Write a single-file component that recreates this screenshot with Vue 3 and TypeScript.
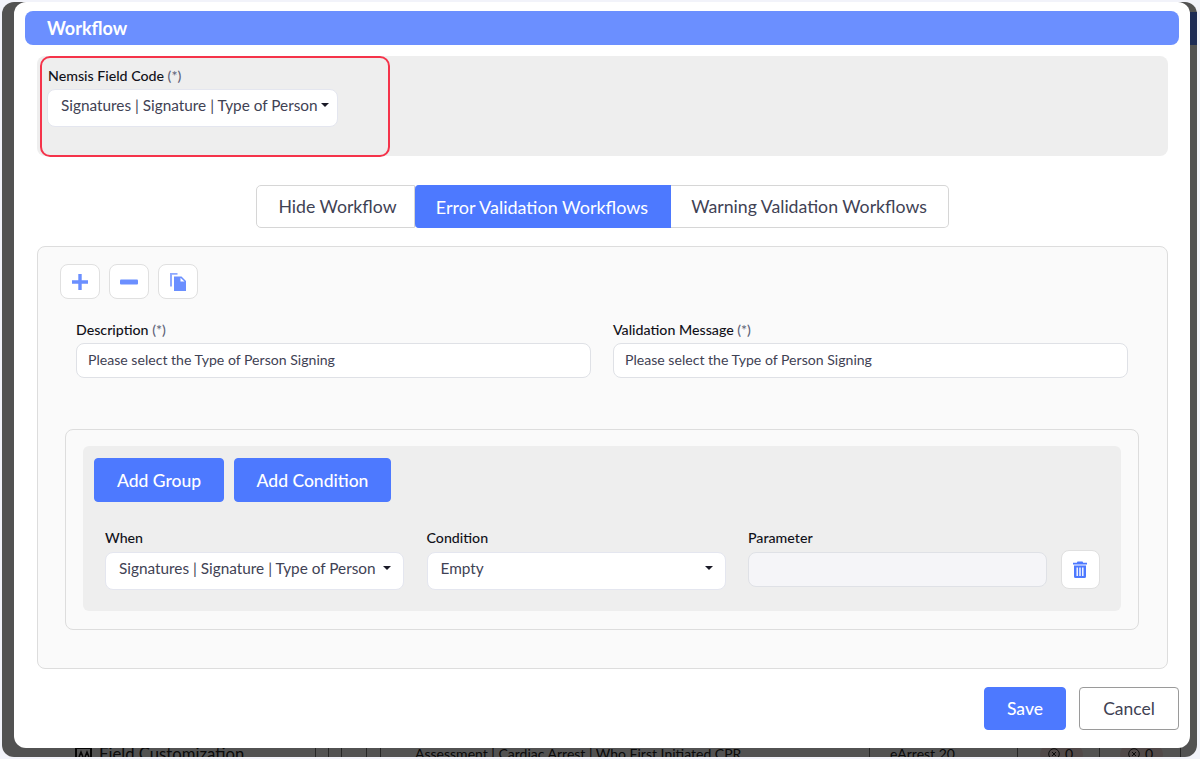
<script setup lang="ts">
import { ref } from "vue";

// タブ
const tabs = ["Hide Workflow", "Error Validation Workflows", "Warning Validation Workflows"];
const activeTab = ref(1);

const fieldCode = "Signatures | Signature | Type of Person";
const message = "Please select the Type of Person Signing";

// 背面の表の罫線(x座標)
const behindLines = [315, 328, 341, 366, 380, 869, 1017, 1099, 1180];
</script>

<template>
    <div class="page">
        <!-- 背面の画面(モーダルの下にわずかに見える部分) -->
        <div class="behind">
            <div class="behind-row">
                <i v-for="x in behindLines" :key="x" class="behind-line" :style="{ left: x - 2 + 'px' }"></i>
                <svg class="behind-icon" width="17" height="14" viewBox="0 0 17 14">
                    <path d="M1 1h15v12H1z" fill="none" stroke="#111" stroke-width="2" />
                    <path d="M4 10l2-5 2 5M10 10l2-5 2 5" fill="none" stroke="#111" stroke-width="1.500" />
                </svg>
                <span class="behind-title">Field Customization</span>
                <span class="behind-name">Assessment | Cardiac Arrest | Who First Initiated CPR</span>
                <span class="behind-code">eArrest 20</span>
                <span class="behind-count first">
                    <svg width="12" height="12" viewBox="0 0 12 12">
                        <circle cx="6" cy="6" r="5.300" fill="none" stroke="#222" />
                        <path d="M4 4l4 4M8 4l-4 4" stroke="#222" />
                    </svg>
                    0
                </span>
                <span class="behind-count second">
                    <svg width="12" height="12" viewBox="0 0 12 12">
                        <circle cx="6" cy="6" r="5.300" fill="none" stroke="#222" />
                        <path d="M4 4l4 4M8 4l-4 4" stroke="#222" />
                    </svg>
                    0
                </span>
            </div>
        </div>
        <div class="backdrop"></div>
        <div class="navy"></div>

        <div class="modal">
            <div class="modal-title">Workflow</div>

            <section class="field-section">
                <label class="label">Nemsis Field Code <span class="req">(*)</span></label>
                <div class="select select-auto">
                    <span>{{ fieldCode }}</span><i class="caret"></i>
                </div>
                <div class="highlight"></div>
            </section>

            <div class="tabs">
                <button v-for="(tab, index) in tabs" :key="tab" class="tab" :class="{ active: index === activeTab }"
                    @click="activeTab = index">
                    {{ tab }}
                </button>
            </div>

            <section class="card">
                <div class="tools">
                    <button class="icon-btn" aria-label="Add">
                        <svg width="16" height="16" viewBox="0 0 16 16">
                            <path d="M6.300 0h3.400v6.300H16v3.400H9.700V16H6.300V9.700H0V6.300h6.300z" fill="#6b8fff" />
                        </svg>
                    </button>
                    <button class="icon-btn" aria-label="Remove">
                        <svg width="18" height="6" viewBox="0 0 18 6">
                            <rect width="18" height="5" y="0.500" rx="1" fill="#6b8fff" />
                        </svg>
                    </button>
                    <button class="icon-btn" aria-label="Copy">
                        <svg width="16" height="18" viewBox="0 0 16 18">
                            <path d="M0 0h7.500v1.700H2V13.500H0z" fill="#8ea9ff" />
                            <path d="M4 3.500h7.500L16 8v10H4z" fill="#6b8fff" />
                            <path d="M10.500 4.800v3.700h4z" fill="#fff" />
                        </svg>
                    </button>
                </div>

                <div class="messages">
                    <div class="msg-field">
                        <label class="label">Description <span class="req">(*)</span></label>
                        <div class="input">{{ message }}</div>
                    </div>
                    <div class="msg-field">
                        <label class="label">Validation Message <span class="req">(*)</span></label>
                        <div class="input">{{ message }}</div>
                    </div>
                </div>

                <div class="builder">
                    <div class="group">
                        <div class="group-actions">
                            <button class="primary add-group">Add Group</button>
                            <button class="primary add-condition">Add Condition</button>
                        </div>
                        <div class="rule">
                            <div class="rule-col">
                                <label class="label">When</label>
                                <div class="select select-rule">
                                    <span>{{ fieldCode }}</span><i class="caret"></i>
                                </div>
                            </div>
                            <div class="rule-col">
                                <label class="label">Condition</label>
                                <div class="select select-rule">
                                    <span>Empty</span><i class="caret"></i>
                                </div>
                            </div>
                            <div class="rule-col">
                                <label class="label">Parameter</label>
                                <div class="param"></div>
                            </div>
                            <button class="trash-btn" aria-label="Delete">
                                <svg width="14" height="17" viewBox="0 0 14 17">
                                    <path d="M4.500 0.500h5l0.700 1.300H14v1.700H0V1.800h3.800z" fill="#4d79ff" />
                                    <path fill-rule="evenodd"
                                        d="M1 4.500h12V15.500a1.500 1.500 0 0 1-1.500 1.500h-9A1.500 1.500 0 0 1 1 15.500zM3.500 6.500v8.500h1.400V6.500zM6.300 6.500v8.500h1.400V6.500zM9.100 6.500v8.500h1.400V6.500z"
                                        fill="#4d79ff" />
                                </svg>
                            </button>
                        </div>
                    </div>
                </div>
            </section>

            <div class="footer">
                <button class="primary save">Save</button>
                <button class="cancel">Cancel</button>
            </div>
        </div>
    </div>
</template>

<style scoped>
.page {
    position: relative;
    width: 1200px;
    height: 759px;
    overflow: hidden;
    background: #f2f3fa;
    font-family: Lato, "Liberation Sans", sans-serif;
    color: #3f4254;
}

.behind {
    position: absolute;
    left: 2px;
    right: 3px;
    top: 2px;
    bottom: 2px;
    background: #fff;
    border-radius: 12px;
    overflow: hidden;
    display: flex;
    align-items: flex-end;
}

.behind-row {
    position: relative;
    width: 100%;
    height: 14px;
    overflow: hidden;
    font-size: 14px;
    line-height: 20px;
    white-space: nowrap;
    color: #222;
}

.behind-row span {
    position: absolute;
    top: 1px;
}

.behind-line {
    position: absolute;
    top: 0;
    width: 1px;
    height: 14px;
    background: #777;
}

.behind-icon {
    position: absolute;
    left: 73px;
    top: 4px;
}

.behind-title {
    left: 97px;
    font-size: 16.700px;
}

.behind-name {
    left: 413px;
}

.behind-code {
    left: 888px;
}

.behind-count {
    display: flex;
    align-items: center;
    gap: 5px;
    box-sizing: border-box;
    width: 43px;
    height: 20px;
    padding-left: 8px;
    background: #fbe4e4;
    border-radius: 10px;
}

.behind-count.first {
    left: 1038px;
}

.behind-count.second {
    left: 1118px;
}

.backdrop {
    position: absolute;
    left: 2px;
    right: 3px;
    top: 2px;
    bottom: 2px;
    background: rgba(0, 0, 0, 0.68);
    border-radius: 12px;
}

.navy {
    position: absolute;
    left: 1190px;
    top: 12px;
    width: 7px;
    height: 33px;
    background: #1d2b55;
}

.modal {
    position: absolute;
    left: 14px;
    top: 2px;
    width: 1176px;
    height: 746px;
    box-sizing: border-box;
    padding: 9px 11px 0;
    background: #fff;
    border-radius: 12px;
    display: flex;
    flex-direction: column;
}

.modal-title {
    height: 34px;
    padding-left: 22px;
    background: #6b8fff;
    border-radius: 8px;
    color: #fff;
    font-size: 18px;
    font-weight: 700;
    line-height: 34px;
}

.label {
    display: block;
    font-size: 14.200px;
    font-weight: 500;
    line-height: 17px;
    color: #111119;
    white-space: nowrap;
}

.req {
    color: #5e6278;
}

.field-section {
    position: relative;
    box-sizing: border-box;
    height: 100px;
    margin: 11px 11px 0 12px;
    padding: 11px 11px 0 11px;
    background: #eeeeee;
    border-radius: 8px;
}

.highlight {
    position: absolute;
    left: 3px;
    top: 0;
    width: 350px;
    height: 101px;
    box-sizing: border-box;
    border: 2.500px solid #f5334a;
    border-radius: 10px;
    pointer-events: none;
}

.select {
    display: flex;
    align-items: center;
    box-sizing: border-box;
    background: #fff;
    border: 1px solid #e4e6ef;
    border-radius: 8px;
    font-size: 15.350px;
    color: #3f4254;
    white-space: nowrap;
}

.select-auto {
    width: 291px;
    height: 38px;
    margin-top: 5px;
    margin-left: -1px;
    padding: 0 8px 6px 13px;
}

.select-rule {
    width: 299px;
    height: 38px;
    padding: 0 12px 6px 13px;
    justify-content: space-between;
}

.caret {
    flex: none;
    width: 0;
    height: 0;
    margin-left: 3px;
    border-left: 4px solid transparent;
    border-right: 4px solid transparent;
    border-top: 4px solid #1a1a27;
}

.tabs {
    display: flex;
    justify-content: center;
    margin-top: 29px;
}

.tab {
    height: 43px;
    padding: 0;
    border: 1px solid #d6d6d6;
    border-left-width: 0;
    background: #fff;
    color: #3f4254;
    font-family: inherit;
    font-size: 17.700px;
    white-space: nowrap;
}

.tab:nth-child(1) {
    width: 159px;
    padding-left: 5px;
    border-left-width: 1px;
    border-radius: 5px 0 0 5px;
}

.tab:nth-child(2) {
    width: 256px;
}

.tab:nth-child(3) {
    width: 278px;
    border-radius: 0 5px 5px 0;
}

.tab.active {
    background: #4d79ff;
    border-color: #4d79ff;
    border-radius: 4px 0 0 4px;
    color: #fff;
    font-size: 18px;
}

.card {
    box-sizing: border-box;
    height: 423px;
    margin: 18px 11px 0 12px;
    padding: 17px 22px 0;
    background: #fafafa;
    border: 1px solid #dddddd;
    border-radius: 8px;
}

.tools {
    display: flex;
    gap: 9px;
}

.icon-btn {
    display: flex;
    align-items: center;
    justify-content: center;
    width: 40px;
    height: 35px;
    padding: 0;
    background: #fff;
    border: 1px solid #e0e0e0;
    border-radius: 8px;
}

.messages {
    display: flex;
    gap: 22px;
    margin: 22px 0 0 16px;
}

.msg-field {
    width: 515px;
}

.input {
    box-sizing: border-box;
    height: 35px;
    margin-top: 5px;
    padding-left: 11px;
    background: #fff;
    border: 1px solid #dfe1e6;
    border-radius: 8px;
    font-size: 14.100px;
    line-height: 32px;
    color: #3f4254;
}

.builder {
    box-sizing: border-box;
    width: 1074px;
    height: 201px;
    margin: 51px 0 0 5px;
    padding: 16px 17px 0;
    border: 1px solid #dddddd;
    border-radius: 8px;
}

.group {
    box-sizing: border-box;
    height: 165px;
    padding: 12px 11px 0;
    background: #eeeeee;
    border-radius: 6px;
}

.group-actions {
    display: flex;
    gap: 10px;
}

.primary {
    height: 44px;
    border: 1px solid #4d79ff;
    border-radius: 4px;
    background: #4d79ff;
    color: #fff;
    font-family: inherit;
    font-size: 17.500px;
    font-weight: 500;
}

.add-group {
    width: 130px;
}

.add-condition {
    width: 157px;
}

.rule {
    display: flex;
    align-items: flex-end;
    gap: 22.500px;
    margin: 27px 0 0 11px;
}

.rule-col .select,
.rule-col .param {
    margin-top: 6px;
}

.param {
    box-sizing: border-box;
    width: 299px;
    height: 35px;
    margin-bottom: 3px;
    background: #f5f5f8;
    border: 1px solid #dfe1e6;
    border-radius: 8px;
}

.trash-btn {
    display: flex;
    align-items: center;
    justify-content: center;
    width: 39px;
    height: 39px;
    margin: 0 0 1px -9px;
    padding: 0;
    background: #fff;
    border: 1px solid #e0e0e0;
    border-radius: 8px;
}

.footer {
    display: flex;
    justify-content: flex-end;
    gap: 13px;
    margin-top: 18px;
}

.footer .save {
    width: 82px;
    height: 43px;
}

.cancel {
    width: 100px;
    height: 43px;
    background: #fff;
    border: 1px solid #9a9a9a;
    border-radius: 4px;
    color: #3f4254;
    font-family: inherit;
    font-size: 17.500px;
}
</style>
